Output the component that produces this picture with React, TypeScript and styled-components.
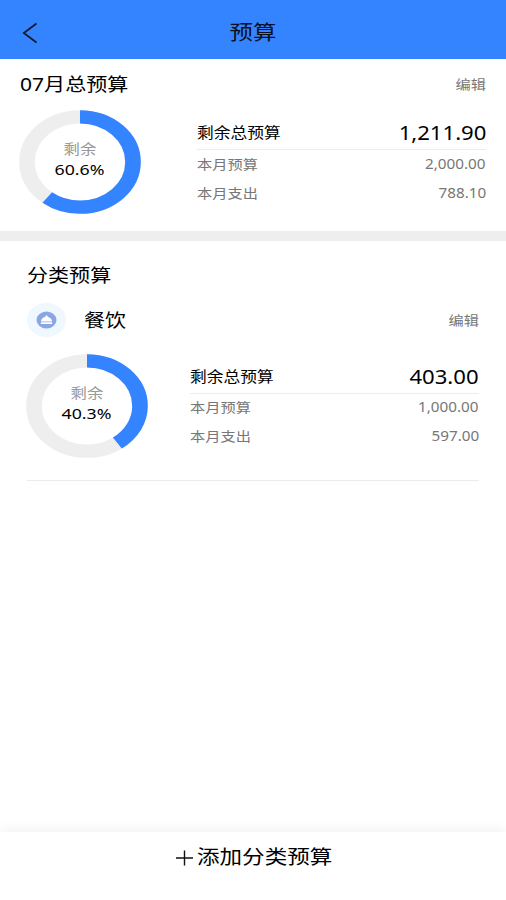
import React from "react";
import styled, { createGlobalStyle } from "styled-components";

const GlobalStyle = createGlobalStyle`
  * { box-sizing: border-box; }
  body {
    margin: 0;
    background: #fff;
    font-family: "Noto Sans", "Noto Sans CJK SC", sans-serif;
  }
`;

const Page = styled.div`
  display: flex;
  flex-direction: column;
  width: 506px;
  height: 900px;
  overflow: hidden;
  background: #fff;
`;

const Header = styled.header`
  display: grid;
  grid-template-columns: 60px 1fr 60px;
  align-items: center;
  height: 59px;
  padding-top: 6px;
  background: #3484ff;
`;

const BackIcon = styled.svg`
  display: block;
  width: 16px;
  height: 22px;
  margin: 1px 0 0 22px;
`;

/* Wide lettering: glyphs are stretched horizontally from the anchored edge. */
const Text = styled.span<{
  $size: number;
  $color?: string;
  $stretch?: number;
  $from?: "left" | "center" | "right";
}>`
  display: block;
  font-size: ${(p) => p.$size}px;
  line-height: 20px;
  color: ${(p) => p.$color ?? "#000"};
  white-space: nowrap;
  text-align: ${(p) => p.$from ?? "left"};
  transform: scaleX(${(p) => p.$stretch ?? 1.17});
  transform-origin: ${(p) => p.$from ?? "left"} center;
`;

const TotalSection = styled.section`
  height: 172px;
  padding: 15px 20px 0 19px;
`;

const Band = styled.div`
  height: 10px;
  background: #eee;
`;

const CategorySection = styled.section`
  flex: 1;
  padding: 24px 27px 0 26px;
`;

const TitleRow = styled.div`
  display: flex;
  justify-content: space-between;
  align-items: center;
  height: 20px;
  padding-left: 1px;
`;

const CategoryRow = styled(TitleRow)`
  height: 34px;
  margin-top: 18px;
`;

const CategoryName = styled.div`
  display: flex;
  align-items: center;
  gap: 18px;
`;

const CategoryIcon = styled.svg`
  display: block;
  width: 39px;
  height: 34px;
`;

const Summary = styled.div<{ $gap: number; $inset: number }>`
  display: flex;
  gap: ${(p) => p.$inset}px;
  margin-top: ${(p) => p.$gap}px;
`;

const Donut = styled.div`
  display: grid;
  width: 122px;
  height: 104px;
  > * { grid-area: 1 / 1; }
`;

const Ring = styled.svg`
  display: block;
  width: 122px;
  height: 104px;
`;

const DonutText = styled.div`
  display: flex;
  flex-direction: column;
  align-items: center;
  padding-top: 29px;
`;

const Figures = styled.div`
  flex: 1;
  padding-top: 12px;
`;

const MainFigure = styled.div`
  display: flex;
  justify-content: space-between;
  height: 28px;
  padding-top: 1px;
  margin-bottom: -1px;
  border-bottom: 1px solid #ececec;
`;

const Figure = styled.div`
  display: flex;
  justify-content: space-between;
  align-items: center;
  height: 29px;
`;

const Divider = styled.div`
  height: 1px;
  margin: 22px 0 0 1px;
  background: #ebebeb;
`;

const Footer = styled.footer`
  display: flex;
  justify-content: center;
  gap: 4px;
  height: 68px;
  padding-top: 15px;
  background: #fff;
  box-shadow: 0 -2px 12px rgba(0, 0, 0, 0.06);
`;

const PlusIcon = styled.svg`
  display: block;
  width: 17px;
  height: 20px;
`;

const FooterLabel = styled.div`
  width: 134px;
`;

interface BudgetProps {
  percent: number;
  left: string;
  budget: string;
  spent: string;
  gap: number;
  inset: number;
}

function Budget({ percent, left, budget, spent, gap, inset }: BudgetProps) {
  return (
    <Summary $gap={gap} $inset={inset}>
      <Donut>
        <Ring viewBox="0 0 122 122" preserveAspectRatio="none">
          <g transform="rotate(-90 61 61)" fill="none" strokeWidth="15.6">
            <circle cx="61" cy="61" r="53" stroke="#eee" />
            <circle
              cx="61"
              cy="61"
              r="53"
              stroke="#3484ff"
              pathLength="100"
              strokeDasharray={`${percent} 100`}
            />
          </g>
        </Ring>
        <DonutText>
          <Text $size={14} $color="#999" $from="center">剩余</Text>
          <Text $size={15.3} $from="center" $stretch={1.16}>{percent}%</Text>
        </DonutText>
      </Donut>
      <Figures>
        <MainFigure>
          <Text $size={14.3}>剩余总预算</Text>
          <Text $size={20} $from="right" $stretch={1.105}>{left}</Text>
        </MainFigure>
        <Figure>
          <Text $size={13} $color="#777">本月预算</Text>
          <Text $size={13.5} $color="#777" $from="right" $stretch={1.13}>{budget}</Text>
        </Figure>
        <Figure>
          <Text $size={13} $color="#777">本月支出</Text>
          <Text $size={13.5} $color="#777" $from="right" $stretch={1.13}>{spent}</Text>
        </Figure>
      </Figures>
    </Summary>
  );
}

export default function App() {
  return (
    <Page>
      <GlobalStyle />
      <Header>
        <BackIcon viewBox="0 0 16 22" fill="none" stroke="#101827" strokeWidth="1.7">
          <path d="M14.5 1.5 L1.8 11 L14.5 20.5" />
        </BackIcon>
        <Text $size={20} $from="center" $color="#0a1020">预算</Text>
      </Header>
      <TotalSection>
        <TitleRow>
          <Text $size={18}>07月总预算</Text>
          <Text $size={13} $color="#777" $from="right">编辑</Text>
        </TitleRow>
        <Budget percent={60.6} left="1,211.90" budget="2,000.00" spent="788.10" gap={16} inset={56} />
      </TotalSection>
      <Band />
      <CategorySection>
        <TitleRow>
          <Text $size={18}>分类预算</Text>
        </TitleRow>
        <CategoryRow>
          <CategoryName>
            <CategoryIcon viewBox="0 0 39 34">
              <ellipse cx="19.5" cy="17" rx="19.5" ry="17" fill="#eef8fe" />
              <ellipse cx="19.5" cy="17" rx="10" ry="8.6" fill="#8ba6e3" />
              <path d="M14 18.6 C14 16 16 14.6 18.2 13.8 L19.5 12 L20.8 13.8 C23 14.6 25 16 25 18.6 Z" fill="#fff" />
              <rect x="13.8" y="19.3" width="11.4" height="1.7" rx=".6" fill="#fff" />
            </CategoryIcon>
            <Text $size={18}>餐饮</Text>
          </CategoryName>
          <Text $size={13} $color="#777" $from="right">编辑</Text>
        </CategoryRow>
        <Budget percent={40.3} left="403.00" budget="1,000.00" spent="597.00" gap={16.5} inset={42} />
        <Divider />
      </CategorySection>
      <Footer>
        <PlusIcon viewBox="0 0 17 20" fill="none" stroke="#111" strokeWidth="1.4">
          <path d="M0 11 H17 M8.5 3.5 V18.5" />
        </PlusIcon>
        <FooterLabel>
          <Text $size={19.3}>添加分类预算</Text>
        </FooterLabel>
      </Footer>
    </Page>
  );
}
